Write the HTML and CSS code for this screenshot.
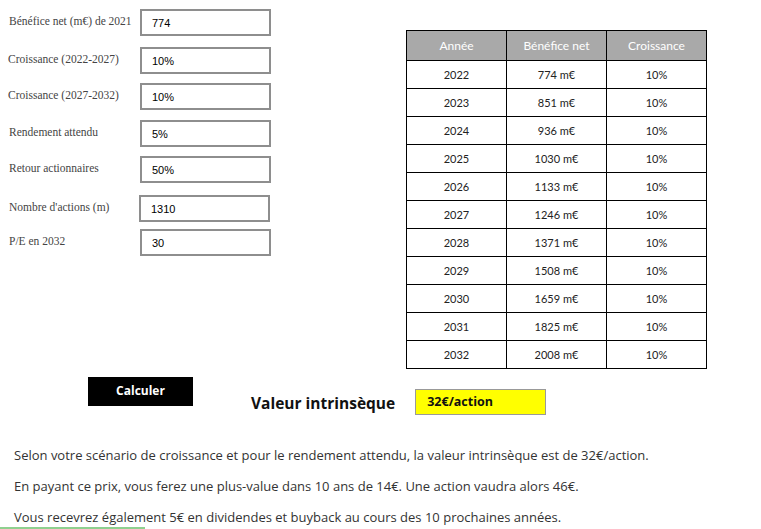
FILE: index.html
```html
<!DOCTYPE html>
<html lang="fr">
<head>
    <meta charset="UTF-8">
    <meta name="viewport" content="width=device-width, initial-scale=1.0">
    <title>Valeur intrinsèque</title>
    <link rel="stylesheet" href="styles.css">
</head>
<body>
    <div id="main">
        <div class="top">
            <div class="form">
                <div class="row r1">
                    <label>Bénéfice net (m€) de 2021</label>
                    <input type="text" value="774">
                </div>
                <div class="row r2">
                    <label>Croissance (2022-2027)</label>
                    <input type="text" value="10%">
                </div>
                <div class="row r3">
                    <label>Croissance (2027-2032)</label>
                    <input type="text" value="10%">
                </div>
                <div class="row r4">
                    <label>Rendement attendu</label>
                    <input type="text" value="5%">
                </div>
                <div class="row r5">
                    <label>Retour actionnaires</label>
                    <input type="text" value="50%">
                </div>
                <div class="row r6">
                    <label>Nombre d'actions (m)</label>
                    <input type="text" value="1310">
                </div>
                <div class="row r7">
                    <label>P/E en 2032</label>
                    <input type="text" value="30">
                </div>
            </div>

            <table id="result-table">
                <thead>
                    <tr><th>Année</th><th>Bénéfice net</th><th>Croissance</th></tr>
                </thead>
                <tbody>
                    <tr><td>2022</td><td>774 m€</td><td>10%</td></tr>
                    <tr><td>2023</td><td>851 m€</td><td>10%</td></tr>
                    <tr><td>2024</td><td>936 m€</td><td>10%</td></tr>
                    <tr><td>2025</td><td>1030 m€</td><td>10%</td></tr>
                    <tr><td>2026</td><td>1133 m€</td><td>10%</td></tr>
                    <tr><td>2027</td><td>1246 m€</td><td>10%</td></tr>
                    <tr><td>2028</td><td>1371 m€</td><td>10%</td></tr>
                    <tr><td>2029</td><td>1508 m€</td><td>10%</td></tr>
                    <tr><td>2030</td><td>1659 m€</td><td>10%</td></tr>
                    <tr><td>2031</td><td>1825 m€</td><td>10%</td></tr>
                    <tr><td>2032</td><td>2008 m€</td><td>10%</td></tr>
                </tbody>
            </table>
        </div>

        <div class="actions">
            <button id="calc-button">Calculer</button>
            <div class="value">
                <span class="value-label">Valeur intrinsèque</span>
                <span class="value-box">32€/action</span>
            </div>
        </div>

        <div class="summary">
            <p>Selon votre scénario de croissance et pour le rendement attendu, la valeur intrinsèque est de 32€/action.</p>
            <p>En payant ce prix, vous ferez une plus-value dans 10 ans de 14€. Une action vaudra alors 46€.</p>
            <p>Vous recevrez également 5€ en dividendes et buyback au cours des 10 prochaines années.</p>
        </div>
    </div>
    <div class="green-line"></div>
</body>
</html>
```

FILE: styles.css
```css
body {
    background-color: white;
    color: #222;
    font-family: Lato, sans-serif;
    margin: 0;
    padding: 0;
    overflow: hidden;
}
#main {
    padding: 9px 0 0 0;
}
.top {
    display: flex;
    align-items: flex-start;
}
.form {
    display: flex;
    flex-direction: column;
    width: 406px;
}
.row {
    display: flex;
    align-items: center;
    padding-left: 9px;
}
.row label {
    width: 131px;
    font-family: "Liberation Serif", serif;
    font-size: 11.5px;
    color: #444;
    margin-top: -4px;
}
.row input {
    width: 131px;
    height: 27px;
    box-sizing: border-box;
    border: 2px solid #8e8e8e;
    padding: 0 0 0 10px;
    font-family: "Liberation Sans", Arial, sans-serif;
    font-size: 11px;
    color: black;
    outline: none;
}
.r2 { margin-top: 11px; }
.r3 { margin-top: 9px; }
.r4 { margin-top: 10px; }
.r5 { margin-top: 9px; }
.r6 { margin-top: 12px; }
.r7 { margin-top: 7px; }
.r2 label, .r3 label { margin-left: -1px; width: 132px; }
.r6 input { margin-left: -1px; }

#result-table {
    margin-top: 21px;
    border-collapse: collapse;
    width: 301px;
    font-size: 11px;
}
#result-table th, #result-table td {
    border: 1px solid black;
    text-align: center;
    width: 33%;
    padding: 0;
}
#result-table th {
    background-color: #a9a9a9;
    color: white;
    font-weight: normal;
    font-size: 12px;
    height: 29px;
}
#result-table td {
    height: 27px;
    color: #222;
}

.actions {
    display: flex;
    align-items: flex-start;
    padding-left: 88px;
    margin-top: 8px;
}
#calc-button {
    background-color: black;
    color: white;
    border: none;
    width: 105px;
    height: 29px;
    font-family: "Open Sans", sans-serif;
    font-weight: 700;
    font-size: 12px;
    padding: 0 0 3px 0;
    cursor: pointer;
}
.value {
    display: flex;
    align-items: center;
    margin: 12px 0 0 58px;
}
.value-label {
    font-family: "Open Sans", sans-serif;
    font-weight: 700;
    font-size: 15.5px;
    color: #111;
    margin-top: 2px;
}
.value-box {
    margin-left: 20px;
    width: 131px;
    height: 26px;
    box-sizing: border-box;
    background-color: #ffff00;
    border: 1.5px solid #999;
    padding: 3px 0 0 11px;
    font-family: "Open Sans", sans-serif;
    font-weight: 700;
    font-size: 12.5px;
    color: #111;
}

.summary {
    padding: 32px 0 0 14px;
}
.summary p {
    margin: 0 0 14px 0;
    font-family: "Open Sans", sans-serif;
    font-size: 13px;
    line-height: 17px;
    color: #333;
}
.green-line {
    position: fixed;
    left: 0;
    bottom: 0;
    width: 145px;
    height: 2px;
    background-color: #8fd08f;
}
```
